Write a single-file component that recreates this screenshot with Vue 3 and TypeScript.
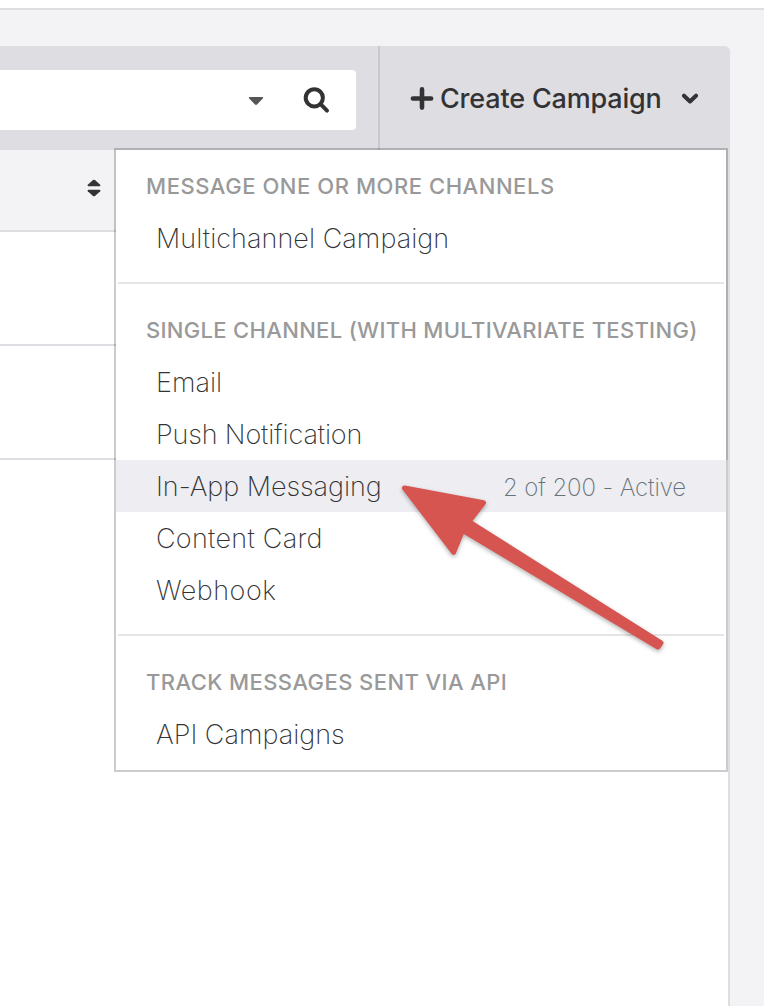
<script setup lang="ts">
interface Channel {
  label: string
  key: string
  status?: string
}
interface Group {
  title: string
  key: string
  items: Channel[]
}

const groups: Group[] = [
  {
    title: 'MESSAGE ONE OR MORE CHANNELS',
    key: 'multi',
    items: [{ label: 'Multichannel Campaign', key: 'multichannel' }],
  },
  {
    title: 'SINGLE CHANNEL (WITH MULTIVARIATE TESTING)',
    key: 'single',
    items: [
      { label: 'Email', key: 'email' },
      { label: 'Push Notification', key: 'push' },
      { label: 'In-App Messaging', key: 'in-app', status: '2 of 200 - Active' },
      { label: 'Content Card', key: 'card' },
      { label: 'Webhook', key: 'webhook' },
    ],
  },
  {
    title: 'TRACK MESSAGES SENT VIA API',
    key: 'track',
    items: [{ label: 'API Campaigns', key: 'api' }],
  },
]
</script>

<template>
  <div class="page">
    <header class="topbar"></header>
    <main class="panel">
      <div class="toolbar">
        <div class="search">
          <svg class="caret" width="16" height="10" viewBox="0 0 16 10">
            <path d="M1.8 1H14.2Q15.8 1.3 14.8 2.6L9 8.6Q8 9.5 7 8.6L1.2 2.6Q.2 1.3 1.8 1Z" />
          </svg>
          <svg class="lens" width="28" height="28" viewBox="0 0 28 28">
            <circle cx="12.3" cy="11.8" r="8.6" />
            <path d="M18.8 18.3L25 24.6" />
          </svg>
        </div>
        <button class="create" type="button">
          <svg class="plus" width="24" height="24" viewBox="0 0 24 24">
            <path d="M12 2.4V20.6M2.9 11.5H21.1" />
          </svg>
          <span class="create-label">Create Campaign</span>
          <svg class="chevron" width="18" height="12" viewBox="0 0 18 12">
            <path d="M3 2.7L9 8.5L15 2.7" />
          </svg>
        </button>
        <div class="menu">
          <section v-for="group in groups" :key="group.key" class="group">
            <h3 class="title" :class="group.key">{{ group.title }}</h3>
            <div
              v-for="item in group.items"
              :key="item.key"
              class="item"
              :class="{ active: item.status }"
            >
              <span :class="item.key">{{ item.label }}</span>
              <span v-if="item.status" class="status">{{ item.status }}</span>
            </div>
          </section>
          <svg class="arrow" width="290" height="190" viewBox="390 475 290 190">
            <path
              d="M404.5 488L483.5 502.8L468.8 521.6L661 642.8L658 647L462.6 530.3L453.6 552.3Z"
            />
          </svg>
        </div>
      </div>
      <div class="table">
        <div class="head">
          <svg class="sort" width="14" height="18" viewBox="0 0 14 18">
            <path d="M1.3 7.2Q0 7 .8 5.8L6 1.1Q7 .3 8 1.1L13.2 5.8Q14 7 12.7 7.2Z" />
            <path d="M1.3 10.8Q0 11 .8 12.2L6 16.9Q7 17.7 8 16.9L13.2 12.2Q14 11 12.7 10.8Z" />
          </svg>
        </div>
        <div class="row"></div>
        <div class="row"></div>
      </div>
    </main>
  </div>
</template>

<style>
html,
body {
  margin: 0;
  background: #f3f3f5;
}
</style>

<style scoped>
* {
  box-sizing: border-box;
}
.page {
  width: 764px;
  height: 1006px;
  overflow: hidden;
  display: flex;
  flex-direction: column;
  background: #f3f3f5;
  font-family: Inter, 'Liberation Sans', sans-serif;
  color: #333335;
}
.topbar {
  height: 10px;
  flex: none;
  background: #fff;
  border-bottom: 2px solid #dddde2;
}
.panel {
  width: 730px;
  flex: 1;
  margin-top: 36px;
  background: #fff;
  border-right: 2px solid #dddde2;
  border-top-right-radius: 6px;
}
.toolbar {
  position: relative;
  display: flex;
  width: 730px;
  height: 104px;
  background: #dedde2;
  border-top-right-radius: 6px;
}
.search {
  display: flex;
  align-items: center;
  justify-content: flex-end;
  width: 356px;
  height: 60px;
  margin: 24px 22px 0 0;
  padding-right: 26px;
  gap: 38px;
  background: #fff;
  border-radius: 0 4px 4px 0;
}
.caret {
  fill: #555557;
  margin-top: 2px;
}
.lens {
  fill: none;
  stroke: #333335;
  stroke-width: 4;
  stroke-linecap: round;
}
.create {
  display: flex;
  align-items: center;
  flex: 1;
  padding: 1px 0 0 30px;
  border: 0;
  border-left: 2px solid #c9c8cd;
  background: none;
  color: #333335;
  font-family: inherit;
}
.plus,
.chevron {
  fill: none;
  stroke: #333335;
  stroke-width: 4.6;
  stroke-linecap: round;
}
.create-label {
  width: 221px;
  margin-left: 6px;
  text-align: left;
  font-size: 27px;
  font-weight: 500;
  line-height: 36px;
  letter-spacing: -0.18px;
  white-space: nowrap;
}
.chevron {
  margin-left: 20px;
  stroke-width: 4;
  stroke-linejoin: round;
}
.menu {
  position: absolute;
  z-index: 2;
  left: 114px;
  top: 102px;
  width: 614px;
  height: 624px;
  padding: 10px 0;
  border: 2px solid rgba(0, 0, 0, 0.2);
  background: #fff;
  background-clip: padding-box;
}
.group + .group::before {
  content: '';
  display: block;
  height: 2px;
  margin: 18px 2px 20px;
  background: #e5e5e5;
}
.title {
  margin: 0;
  padding-left: 30px;
  height: 52px;
  line-height: 52px;
  font-size: 22px;
  font-weight: 500;
  color: #999;
  white-space: nowrap;
}
.multi {
  letter-spacing: 0.55px;
}
.single {
  letter-spacing: 0.32px;
}
.track {
  letter-spacing: 0.42px;
}
.item {
  display: flex;
  align-items: center;
  justify-content: space-between;
  height: 52px;
  padding: 2px 40px 0 40px;
  font-size: 27px;
  font-weight: 240;
  line-height: 36px;
  white-space: nowrap;
}
.multichannel {
  letter-spacing: 0.05px;
}
.push {
  letter-spacing: -0.14px;
}
.in-app {
  letter-spacing: -0.05px;
}
.card {
  letter-spacing: 0.28px;
}
.webhook {
  letter-spacing: 0.5px;
}
.active {
  background: #eeedf2;
}
.status {
  padding-top: 2px;
  font-size: 24px;
  letter-spacing: -0.12px;
  color: #65727a;
}
.arrow {
  position: absolute;
  left: 274px;
  top: 325px;
  fill: #d65550;
  stroke: #d65550;
  stroke-width: 5;
  stroke-linejoin: round;
  filter: drop-shadow(0 2px 2px rgba(0, 0, 0, 0.3));
}
.table {
  height: 310px;
  border-right: 2px solid #dddde2;
  width: 728px;
}
.head {
  display: flex;
  align-items: center;
  height: 82px;
  padding: 0 0 4px 87px;
  background: #f3f3f5;
  border-bottom: 2px solid #dddde2;
}
.sort {
  fill: #333335;
}
.row {
  height: 114px;
  border-bottom: 2px solid #dddde2;
}
</style>
